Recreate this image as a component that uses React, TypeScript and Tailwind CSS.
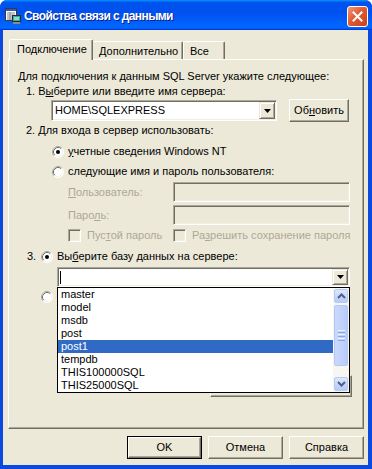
import React from "react";

function Radio({ checked }: { checked?: boolean }) {
  return (
    <svg width="12" height="12" viewBox="0 0 12 12" className="shrink-0 block">
      <circle cx="6" cy="6" r="5.5" fill="#fff" />
      <path d="M2.11 9.89 A5.5 5.5 0 0 1 9.89 2.11" stroke="#ACA899" strokeWidth="1" fill="none" />
      <path d="M2.82 9.18 A4.5 4.5 0 0 1 9.18 2.82" stroke="#716F64" strokeWidth="1" fill="none" />
      <path d="M9.89 2.11 A5.5 5.5 0 0 1 2.11 9.89" stroke="#FFFFFF" strokeWidth="1" fill="none" />
      <path d="M9.18 2.82 A4.5 4.5 0 0 1 2.82 9.18" stroke="#F1EFE2" strokeWidth="1" fill="none" />
      {checked && <circle cx="6" cy="6" r="2" fill="#000" />}
    </svg>
  );
}

function Check() {
  return (
    <div className="w-[13px] h-[13px] shrink-0 border border-t-[#ACA899] border-l-[#ACA899] border-r-white border-b-white shadow-[inset_1px_1px_0_#716F64,inset_-1px_-1px_0_#F1EFE2] bg-[#ECE9D8]" />
  );
}

function Arrow() {
  return (
    <svg width="7" height="4" viewBox="0 0 7 4" className="block">
      <path d="M0 0H7L3.5 4Z" fill="#000" />
    </svg>
  );
}

function ComboButton() {
  return (
    <div className="w-[16px] h-full shrink-0 bg-[#ECE9D8] border border-t-[#ECE9D8] border-l-[#ECE9D8] border-r-[#716F64] border-b-[#716F64] shadow-[inset_1px_1px_0_#FFFFFF,inset_-1px_-1px_0_#ACA899] flex items-center justify-center">
      <Arrow />
    </div>
  );
}

function Sunken({ className, children }: { className?: string; children?: React.ReactNode }) {
  return (
    <div
      className={
        "border border-t-[#ACA899] border-l-[#ACA899] border-r-white border-b-white shadow-[inset_1px_1px_0_#716F64,inset_-1px_-1px_0_#F1EFE2] " +
        (className || "")
      }
    >
      {children}
    </div>
  );
}

function Button({ children, w, def }: { children: React.ReactNode; w: string; def?: boolean }) {
  const inner = (
    <div className="w-full h-full bg-[#ECE9D8] border border-t-white border-l-white border-r-[#716F64] border-b-[#716F64] shadow-[inset_-1px_-1px_0_#ACA899] flex items-center justify-center">
      {children}
    </div>
  );
  return (
    <div className={w + " h-[23px] shrink-0 " + (def ? "border border-black" : "")}>{inner}</div>
  );
}

function Chevron({ up }: { up?: boolean }) {
  return (
    <svg width="9" height="6" viewBox="0 0 9 6" className="block">
      <path
        d={up ? "M1 5L4.5 1.5L8 5" : "M1 1L4.5 4.5L8 1"}
        stroke="#4D6185"
        strokeWidth="2"
        fill="none"
      />
    </svg>
  );
}

function ScrollBtn({ up }: { up?: boolean }) {
  return (
    <div className="h-[16px] w-[16px] p-[1px]">
      <div className="w-full h-full rounded-[2px] border border-[#B6C9F7] bg-[linear-gradient(180deg,#DDE7FE,#C3D4FB_60%,#B7CAF8)] flex items-center justify-center">
        <Chevron up={up} />
      </div>
    </div>
  );
}

const items = ["master", "model", "msdb", "post", "post1", "tempdb", "THIS100000SQL", "THIS25000SQL"];

export default function App() {
  return (
    <div className="w-[372px] h-[469px] bg-white font-['Liberation_Sans',Arial,sans-serif] text-[11px] leading-[13px] text-black select-none">
      <div className="w-full h-full flex flex-col bg-[#0A4AE0] rounded-t-[7px] overflow-hidden">
        {/* title bar */}
        <div className="h-[30px] shrink-0 flex items-center pl-[5px] pr-[4px] pt-[2px] bg-[linear-gradient(180deg,#0997ff,#0053ee_8%,#0050ee_40%,#0066ff_88%,#0066ff_93%,#005bff_95%,#003dd7_96%,#003dd7)]">
          <svg width="16" height="16" viewBox="0 0 16 16" className="shrink-0 block">
            <rect x="0.5" y="0.5" width="11" height="12" fill="#fff" stroke="#3A3A3A" />
            <rect x="1" y="1" width="10" height="2" fill="#2B5BC9" />
            <path d="M2 5H10M2 7H10M2 9H10M2 11H7M5 4V12" stroke="#8A8A8A" strokeWidth="1" />
            <rect x="7.5" y="7.5" width="8" height="6" fill="#3FA8A0" stroke="#2A2A2A" />
            <rect x="9" y="9" width="5" height="3" fill="#7FE0D0" />
            <rect x="8" y="14" width="7" height="2" fill="#8C8C8C" />
          </svg>
          <div className="ml-[3px] text-white font-bold text-[12px] tracking-[-0.6px] leading-[16px] [text-shadow:1px_1px_0_#0A1E8C] whitespace-nowrap">
            Свойства связи с данными
          </div>
          <div className="flex-1" />
          <div className="w-[21px] h-[21px] rounded-[3px] border border-white bg-[linear-gradient(135deg,#F09A7A,#E25A32_45%,#C8411A)] flex items-center justify-center">
            <svg width="11" height="11" viewBox="0 0 11 11" className="block">
              <path d="M1.5 1.5L9.5 9.5M9.5 1.5L1.5 9.5" stroke="#fff" strokeWidth="2" strokeLinecap="square" />
            </svg>
          </div>
        </div>

        {/* client area */}
        <div className="flex-1 ml-[3px] mr-[4px] mb-[4px] bg-[#ECE9D8] flex flex-col pt-[9px] pl-[5px] pr-[4px]">
          {/* tabs */}
          <div className="flex items-end h-[20px] pl-[1px]">
            <div className="relative z-10 -mb-[1px] h-[21px] w-[84px] bg-[#ECE9D8] border-t border-l border-r border-t-white border-l-white border-r-[#716F64] rounded-t-[2px] shadow-[inset_-1px_0_0_#ACA899] pl-[7px] pt-[3px] whitespace-nowrap">
              Подключение
            </div>
            <div className="h-[18px] w-[90px] bg-[#ECE9D8] border-t border-r border-t-white border-r-[#716F64] rounded-t-[2px] shadow-[inset_-1px_0_0_#ACA899] pl-[6px] pt-[3px] whitespace-nowrap">
              Дополнительно
            </div>
            <div className="h-[18px] w-[42px] bg-[#ECE9D8] border-t border-l border-r border-t-white border-l-white border-r-[#716F64] rounded-t-[2px] shadow-[inset_-1px_0_0_#ACA899] pl-[6px] pt-[3px] whitespace-nowrap">
              Все
            </div>
          </div>

          {/* panel */}
          <div className="h-[370px] shrink-0 border border-t-white border-l-white border-r-[#716F64] border-b-[#716F64] shadow-[inset_-1px_-1px_0_#ACA899] flex flex-col">
            <div className="mt-[10px] ml-[9px] h-[13px] whitespace-nowrap">
              Для подключения к данным SQL Server укажите следующее:
            </div>
            <div className="mt-[2px] ml-[17px] h-[13px] whitespace-nowrap">
              1. В<span className="underline">ы</span>берите или введите имя сервера:
            </div>
            <div className="mt-[1px] h-[23px] flex items-center">
              <Sunken className="ml-[42px] w-[226px] h-[21px] bg-white flex p-[1px]">
                <div className="flex-1 pl-[2px] flex items-center">HOME\SQLEXPRESS</div>
                <ComboButton />
              </Sunken>
              <div className="ml-[12px]">
                <Button w="w-[60px]">
                  Об<span className="underline">н</span>овить
                </Button>
              </div>
            </div>
            <div className="mt-[2px] ml-[17px] h-[13px] whitespace-nowrap">2. Для входа в сервер использовать:</div>
            <div className="mt-[8px] h-[13px] flex items-center pl-[43px]">
              <Radio checked />
              <span className="ml-[4px] whitespace-nowrap">
                <span className="underline">у</span>четные сведения Windows NT
              </span>
            </div>
            <div className="mt-[7px] h-[13px] flex items-center pl-[43px]">
              <Radio />
              <span className="ml-[4px] whitespace-nowrap">
                сле<span className="underline">д</span>ующие имя и пароль пользователя:
              </span>
            </div>
            <div className="mt-[4px] h-[20px] flex items-center pl-[59px] text-[#ACA899]">
              <span className="w-[105px] whitespace-nowrap">
                <span className="underline">П</span>ользователь:
              </span>
              <Sunken className="w-[177px] h-[20px] bg-[#ECE9D8]" />
            </div>
            <div className="mt-[3px] h-[20px] flex items-center pl-[59px] text-[#ACA899]">
              <span className="w-[105px] whitespace-nowrap">
                Паро<span className="underline">л</span>ь:
              </span>
              <Sunken className="w-[177px] h-[20px] bg-[#ECE9D8]" />
            </div>
            <div className="mt-[4px] h-[13px] flex items-center pl-[59px] text-[#ACA899]">
              <Check />
              <span className="ml-[6px] w-[86px] whitespace-nowrap">
                Пус<span className="underline">т</span>ой пароль
              </span>
              <Check />
              <span className="ml-[6px] whitespace-nowrap">
                Ра<span className="underline">з</span>решить сохранение пароля
              </span>
            </div>
            <div className="mt-[8px] h-[13px] flex items-center pl-[18px]">
              <span className="w-[14px]">3.</span>
              <Radio checked />
              <span className="ml-[4px] whitespace-nowrap">
                Вы<span className="underline">б</span>ерите базу данных на сервере:
              </span>
            </div>
            <div className="mt-[4px] ml-[48px] w-[293px] relative">
              <Sunken className="h-[20px] bg-white flex p-[1px]">
                <div className="flex-1 pl-[1px] flex items-center">
                  <div className="w-[1px] h-[13px] bg-black" />
                </div>
                <ComboButton />
              </Sunken>
              <div className="absolute left-0 top-full z-20 w-[293px] h-[106px] border border-black bg-white flex">
                <div className="flex-1 flex flex-col">
                  {items.map((it) => (
                    <div
                      key={it}
                      className={
                        "h-[13px] leading-[13px] pl-[3px] whitespace-nowrap " +
                        (it === "post1" ? "bg-[#316AC5] text-white" : "")
                      }
                    >
                      {it}
                    </div>
                  ))}
                </div>
                <div className="w-[16px] h-full flex flex-col bg-[#F7F6F1]">
                  <ScrollBtn up />
                  <div className="mt-[1px] h-[61px] px-[1px]">
                    <div className="w-full h-full rounded-[2px] border border-[#B4C7F6] bg-[linear-gradient(90deg,#CAD8FC,#C1D2FB_50%,#B8CBF9)] flex flex-col items-center justify-center gap-[1px]">
                      <div className="w-[7px] h-[1px] bg-[#EEF4FE]" />
                      <div className="w-[7px] h-[1px] bg-[#8CA5E8]" />
                      <div className="w-[7px] h-[1px] bg-[#EEF4FE]" />
                      <div className="w-[7px] h-[1px] bg-[#8CA5E8]" />
                      <div className="w-[7px] h-[1px] bg-[#EEF4FE]" />
                      <div className="w-[7px] h-[1px] bg-[#8CA5E8]" />
                    </div>
                  </div>
                  <div className="flex-1" />
                  <ScrollBtn />
                </div>
              </div>
            </div>
            <div className="mt-[3px] h-[13px] flex items-center pl-[32px]">
              <Radio />
            </div>
            <div className="mt-[72px] ml-[201px] w-[142px] h-[22px] border border-t-white border-l-white border-r-[#716F64] border-b-[#716F64] shadow-[inset_-1px_-1px_0_#ACA899]" />
          </div>

          {/* buttons */}
          <div className="mt-[7px] flex justify-end gap-[6px]">
            <Button w="w-[75px]" def>
              OK
            </Button>
            <Button w="w-[75px]">Отмена</Button>
            <Button w="w-[75px]">Справка</Button>
          </div>
        </div>
      </div>
    </div>
  );
}
